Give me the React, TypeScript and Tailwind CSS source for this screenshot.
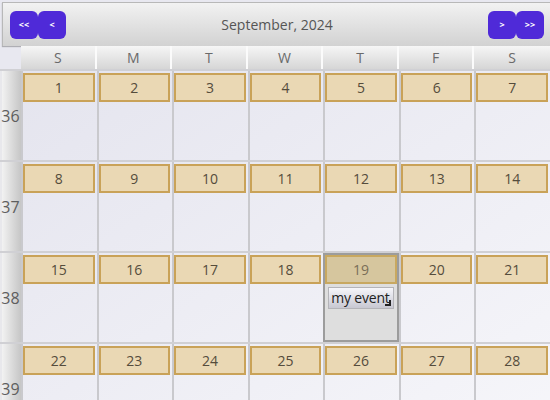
import { useState } from 'react';

const weeks = [
  { no: 36, days: [1, 2, 3, 4, 5, 6, 7] },
  { no: 37, days: [8, 9, 10, 11, 12, 13, 14] },
  { no: 38, days: [15, 16, 17, 18, 19, 20, 21] },
  { no: 39, days: [22, 23, 24, 25, 26, 27, 28] },
];

const dayNames = ['S', 'M', 'T', 'W', 'T', 'F', 'S'];

function NavButton({ label }: { label: string }) {
  return (
    <button className="flex h-[28px] w-[28px] items-center justify-center rounded-[6px] bg-[#4f2ad8] text-[9px] font-bold text-white">
      {label}
    </button>
  );
}

export default function App() {
  const [selected, setSelected] = useState(19);

  return (
    <div className="h-[400px] w-[550px] overflow-hidden bg-[#e8e8f0] font-['Open_Sans',sans-serif] text-[#555]">
      {/* Month header */}
      <div className="ml-[2px] mt-[2px] flex h-[44px] items-center border-l border-t border-[#b8b8b8] bg-gradient-to-b from-[#f2f2f2] to-[#d2d2d2] pl-[7px] pr-[6px] shadow-[0_1px_1px_rgba(0,0,0,0.25)]">
        <div className="flex">
          <NavButton label="<<" />
          <NavButton label="<" />
        </div>
        <div className="flex-1 text-center text-[14px] text-[#555]">September, 2024</div>
        <div className="flex">
          <NavButton label=">" />
          <NavButton label=">>" />
        </div>
      </div>

      {/* Day names */}
      <div className="flex h-[23px]">
        <div className="w-[21px]" />
        <div className="grid flex-1 grid-cols-7 bg-gradient-to-b from-[#f6f6f6] to-[#d6d6d6]">
          {dayNames.map((d, i) => (
            <div
              key={i}
              className="flex items-center justify-center border-r-2 border-[#fbfbfb] text-[14px] leading-none text-[#6a6a6a] last:border-r-0"
            >
              {d}
            </div>
          ))}
        </div>
      </div>

      {/* Weeks */}
      <div className="bg-gradient-to-br from-[#e4e4ee] to-[#f6f6fa]">
        {weeks.map((w) => (
          <div key={w.no} className="flex h-[91px] border-t-2 border-[#d0d0d4]">
            <div className="flex w-[21px] items-center justify-center border-l-[2px] border-[#e8e8ec] bg-gradient-to-r from-[#f2f2f2] to-[#c6c6c6] text-[16px] text-[#5e5e5e]">
              <span className="-ml-[2px]">{w.no}</span>
            </div>
            <div className="grid flex-1 grid-cols-7">
              {w.days.map((d) => {
                const isSel = d === selected;
                return (
                  <div
                    key={d}
                    onClick={() => setSelected(d)}
                    className={
                      isSel
                        ? 'border-2 border-[#9c9c9c] bg-[#dedede] p-0'
                        : 'border-l-2 border-[#c9c9cd] p-[2px] pl-0'
                    }
                  >
                    <div
                      className={
                        isSel
                          ? 'flex h-[29px] items-center justify-center border-2 border-[#c8a860] bg-[#d6c69e] text-[14px] text-[#7a6e58]'
                          : 'flex h-[29px] items-center justify-center border-2 border-[#c9a258] bg-[#ead8b4] text-[14px] text-[#554c3c]'
                      }
                    >
                      {d}
                    </div>
                    {d === 19 && (
                      <div className="relative ml-[3px] mr-[3px] mt-[3px] flex h-[22px] items-center whitespace-nowrap border border-[#b4b4b8] bg-gradient-to-b from-[#f6f6fa] to-[#c8c8d2] pl-[2px] text-[14px] leading-none tracking-[-0.2px] text-[#222]">
                        my event
                        <span className="absolute bottom-[2px] right-[2px] h-[6px] w-[6px] border-b-2 border-r-2 border-[#222]" />
                      </div>
                    )}
                  </div>
                );
              })}
            </div>
          </div>
        ))}
      </div>
    </div>
  );
}
